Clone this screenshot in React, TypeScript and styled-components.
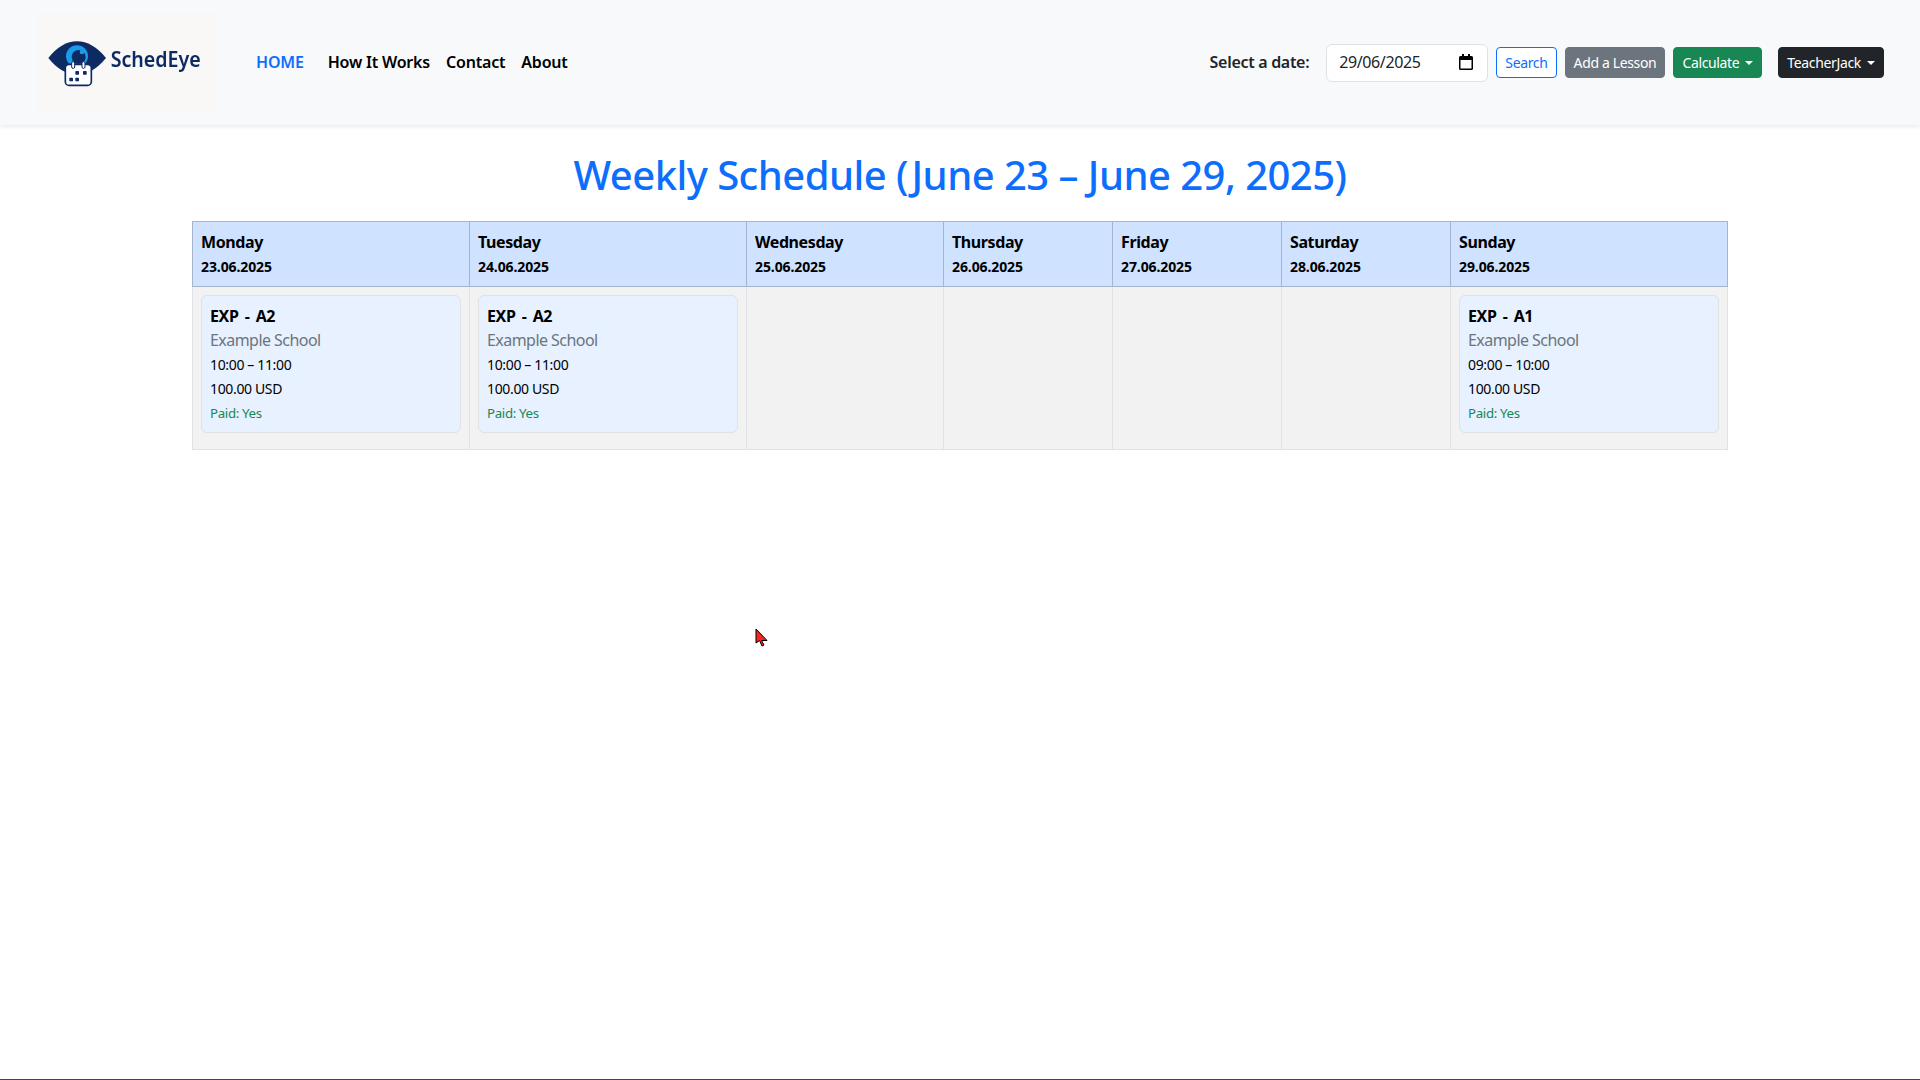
import React from 'react';
import styled, { createGlobalStyle } from 'styled-components';

const GlobalStyle = createGlobalStyle`
  html, body {
    margin: 0;
    padding: 0;
    background: #fff;
    color: #000;
    font-family: "Noto Sans", "Open Sans", Arial, sans-serif;
    font-size: 16px;
  }
  * { box-sizing: border-box; }
`;

const Page = styled.div`
  min-height: 100vh;
  display: flex;
  flex-direction: column;
  position: relative;
  overflow: hidden;
`;

const Navbar = styled.nav`
  height: 125px;
  flex: none;
  display: flex;
  align-items: center;
  padding: 0 36px;
  background: #f8f9fa;
  box-shadow: 0 2px 4px rgba(0, 0, 0, .08);
`;

const LogoLink = styled.a`
  display: block;
  width: 180px;
  height: 100px;
  margin-right: 40px;
`;

const NavLinks = styled.div`
  display: flex;
  align-items: center;
  padding-bottom: 1px;
`;

const NavLink = styled.a<{ $active?: boolean }>`
  font-size: 16px;
  font-weight: 600;
  letter-spacing: -.2px;
  color: ${(p) => (p.$active ? '#0d6efd' : '#000')};
  margin-right: ${(p) => (p.$active ? '24px' : '16px')};
  text-decoration: none;
`;

const Actions = styled.div`
  margin-left: auto;
  display: flex;
  align-items: center;
`;

const DateLabel = styled.label`
  padding-bottom: 1px;
  font-size: 16px;
  font-weight: 600;
  letter-spacing: -.3px;
  color: #212529;
  margin-right: 17px;
`;

const DateField = styled.div`
  width: 162px;
  height: 38px;
  display: flex;
  align-items: center;
  justify-content: space-between;
  padding: 0 14px 1px 12px;
  margin-right: 8px;
  background: #fff;
  border: 1px solid #dee2e6;
  border-radius: 6px;
  font-size: 16px;
  letter-spacing: -.4px;
  color: #212529;
`;

const Button = styled.button<{ $bg: string; $fg?: string; $border?: string; $gap?: number }>`
  height: 31px;
  display: inline-flex;
  align-items: center;
  padding: 0 8px 1px;
  margin-right: ${(p) => p.$gap ?? 8}px;
  font-family: inherit;
  font-size: 14px;
  letter-spacing: -.35px;
  color: ${(p) => p.$fg ?? '#fff'};
  background: ${(p) => p.$bg};
  border: 1px solid ${(p) => p.$border ?? p.$bg};
  border-radius: 4px;
`;

const Caret = styled.span`
  display: inline-block;
  margin-left: 6px;
  margin-top: 1px;
  border-top: 4.2px solid currentColor;
  border-left: 4.2px solid transparent;
  border-right: 4.2px solid transparent;
`;

const Main = styled.main`
  flex: 1;
  width: 1536px;
  margin: 0 auto;
  padding-top: 26px;
`;

const Title = styled.h1`
  margin: 0 0 22px;
  font-size: 40px;
  line-height: 48px;
  font-weight: 500;
  letter-spacing: -.54px;
  text-align: center;
  color: #0d6efd;
`;

const Schedule = styled.table`
  width: calc(100% - 1px);
  table-layout: fixed;
  border-collapse: collapse;
`;

const DayHead = styled.th<{ $width: number }>`
  width: ${(p) => p.$width}px;
  padding: 8px;
  text-align: left;
  vertical-align: top;
  background: #cfe2ff;
  border: 1px solid #a6b5cc;
`;

const DayName = styled.div`
  font-size: 16px;
  line-height: 24px;
  font-weight: 700;
  letter-spacing: -.4px;
`;

const DayDate = styled.div`
  padding-top: 2px;
  font-size: 14px;
  line-height: 22px;
  font-weight: 700;
  letter-spacing: -.1px;
`;

const DayCell = styled.td`
  padding: 8px;
  vertical-align: top;
  background: #f2f2f2;
  border: 1px solid #dee2e6;
`;

const LessonCard = styled.div`
  margin-bottom: 8px;
  padding: 8px;
  background: #e7f1ff;
  border: 1px solid #dee2e6;
  border-radius: 6px;
`;

const LessonTitle = styled.div`
  font-size: 16px;
  line-height: 24px;
  font-weight: 700;
  letter-spacing: -.4px;
  word-spacing: 2.5px;
`;

const School = styled.div`
  font-size: 16px;
  line-height: 24px;
  letter-spacing: -.55px;
  color: #6c757d;
`;

const LessonLine = styled.div`
  padding-top: 2px;
  font-size: 14px;
  line-height: 22px;
  letter-spacing: -.35px;
  color: #000;
`;

const Paid = styled.div`
  padding-top: 2px;
  font-size: 13.3px;
  line-height: 22px;
  letter-spacing: -.35px;
  color: #198754;
`;

const Cursor = styled.svg`
  position: absolute;
  left: 755px;
  top: 628px;
`;

const BottomLine = styled.div`
  height: 1px;
  flex: none;
  background: #553079;
`;

const Logo = () => (
  <svg width="180" height="100" viewBox="18 10 540 300">
    <defs>
      <filter id="soft">
        <feGaussianBlur stdDeviation="1" />
      </filter>
    </defs>
    <rect x="18" y="10" width="540" height="300" fill="#faf7f7" />
    <g filter="url(#soft)">
      <path d="M55 145 Q95 95 141 95 Q187 95 228 145 Q187 195 141 195 Q95 195 55 145Z" fill="#0b2a63" />
      <circle cx="141" cy="140" r="33" fill="#1a9be8" />
      <circle cx="146" cy="142" r="21" fill="#0b2a63" />
      <circle cx="156" cy="127" r="7" fill="#1a9be8" />
      <rect x="106" y="164" width="78" height="63" rx="11" fill="#fff" stroke="#0b2a63" strokeWidth="5" />
      <rect x="125" y="156" width="9" height="20" rx="4" fill="#fff" stroke="#0b2a63" strokeWidth="3" />
      <rect x="156" y="156" width="9" height="20" rx="4" fill="#fff" stroke="#0b2a63" strokeWidth="3" />
      <rect x="136" y="184" width="11" height="11" rx="2" fill="#0b2a63" />
      <rect x="159" y="184" width="11" height="11" rx="2" fill="#0b2a63" />
      <rect x="118" y="204" width="11" height="11" rx="2" fill="#0b2a63" />
      <rect x="136" y="204" width="11" height="11" rx="2" fill="#0b2a63" />
      <text x="242" y="172" fontSize="64" fontWeight="600" fill="#0b2a63" fontFamily="Noto Sans, sans-serif" textLength="270" lengthAdjust="spacingAndGlyphs">SchedEye</text>
    </g>
  </svg>
);

const CalendarIcon = () => (
  <svg width="14" height="16" viewBox="0 0 14 16">
    <path fill="#000" d="M3 0h2v2h4V0h2v2h1.5A1.5 1.5 0 0 1 14 3.5v11a1.5 1.5 0 0 1-1.5 1.5h-11A1.5 1.5 0 0 1 0 14.5v-11A1.5 1.5 0 0 1 1.500 2H3zM1.500 6v8.500h11V6z" />
  </svg>
);

const days = [
  { name: 'Monday', date: '23.06.2025', width: 277, lesson: { title: 'EXP - A2', time: '10:00 – 11:00' } },
  { name: 'Tuesday', date: '24.06.2025', width: 277, lesson: { title: 'EXP - A2', time: '10:00 – 11:00' } },
  { name: 'Wednesday', date: '25.06.2025', width: 197 },
  { name: 'Thursday', date: '26.06.2025', width: 169 },
  { name: 'Friday', date: '27.06.2025', width: 169 },
  { name: 'Saturday', date: '28.06.2025', width: 169 },
  { name: 'Sunday', date: '29.06.2025', width: 277, lesson: { title: 'EXP - A1', time: '09:00 – 10:00' } },
];

export default function App() {
  return (
    <Page>
      <GlobalStyle />
      <Navbar>
        <LogoLink href="#">
          <Logo />
        </LogoLink>
        <NavLinks>
          <NavLink href="#" $active>HOME</NavLink>
          <NavLink href="#">How It Works</NavLink>
          <NavLink href="#">Contact</NavLink>
          <NavLink href="#">About</NavLink>
        </NavLinks>
        <Actions>
          <DateLabel>Select a date:</DateLabel>
          <DateField>
            <span>29/06/2025</span>
            <CalendarIcon />
          </DateField>
          <Button $bg="#fff" $fg="#0d6efd" $border="#0d6efd">Search</Button>
          <Button $bg="#6c757d">Add a Lesson</Button>
          <Button $bg="#198754" $gap={16}>Calculate<Caret /></Button>
          <Button $bg="#212529" $gap={0}>TeacherJack<Caret /></Button>
        </Actions>
      </Navbar>
      <Main>
        <Title>Weekly Schedule (June 23 – June 29, 2025)</Title>
        <Schedule>
          <thead>
            <tr>
              {days.map((d) => (
                <DayHead key={d.name} $width={d.width}>
                  <DayName>{d.name}</DayName>
                  <DayDate>{d.date}</DayDate>
                </DayHead>
              ))}
            </tr>
          </thead>
          <tbody>
            <tr>
              {days.map((d) => (
                <DayCell key={d.name}>
                  {d.lesson && (
                    <LessonCard>
                      <LessonTitle>{d.lesson.title}</LessonTitle>
                      <School>Example School</School>
                      <LessonLine>{d.lesson.time}</LessonLine>
                      <LessonLine>100.00 USD</LessonLine>
                      <Paid>Paid: Yes</Paid>
                    </LessonCard>
                  )}
                </DayCell>
              ))}
            </tr>
          </tbody>
        </Schedule>
      </Main>
      <BottomLine />
      <Cursor width="14" height="20" viewBox="0 0 14 20">
        <path d="M1 1v14l3.500-2.500L7 18l2-1-2.500-4.500H12z" fill="#f52525" stroke="#000" strokeWidth="1" />
      </Cursor>
    </Page>
  );
}
